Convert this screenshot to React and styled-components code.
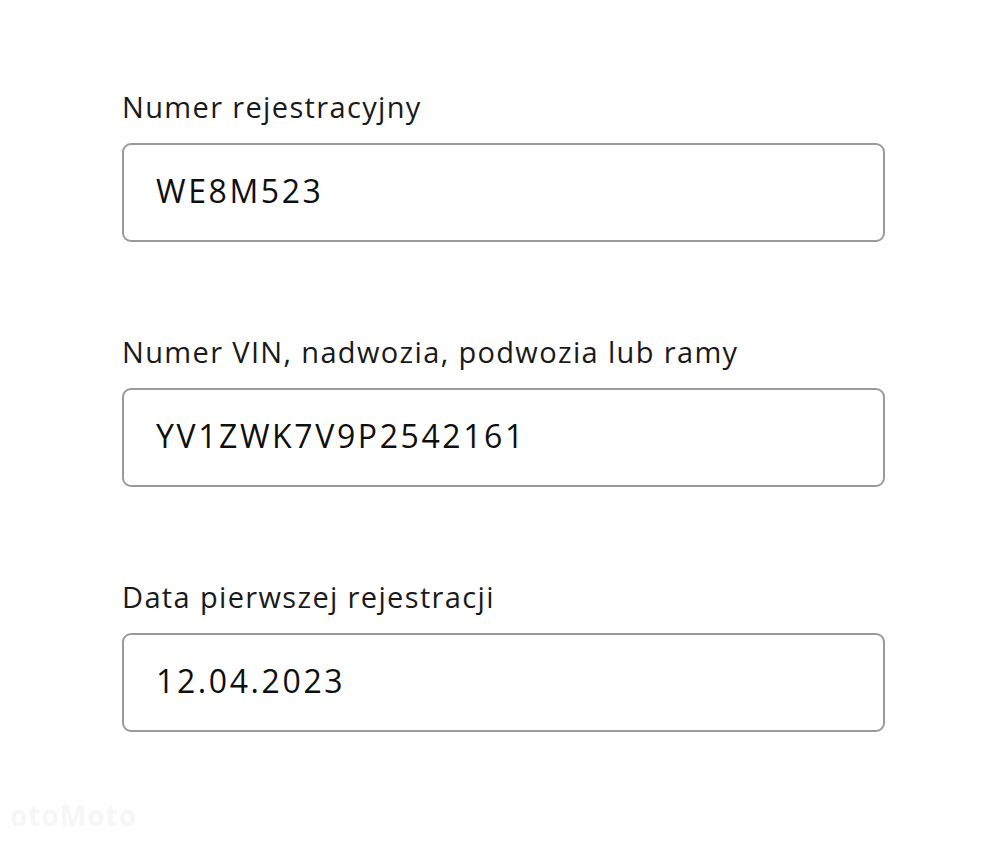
import React from "react";
import styled, { createGlobalStyle } from "styled-components";

const Global = createGlobalStyle`
  html, body { margin: 0; padding: 0; background: #ffffff; }
  body { font-family: "Open Sans", "Noto Sans", "Liberation Sans", sans-serif; }
`;

const Page = styled.div`
  position: relative;
  width: 1000px;
  height: 842px;
  box-sizing: border-box;
  padding: 88px 0 0 122px;
  display: flex;
  flex-direction: column;
  gap: 91px;
  background: #fff;
  overflow: hidden;
`;

const Field = styled.div`
  display: flex;
  flex-direction: column;
  gap: 17px;
  width: 763px;
`;

const Label = styled.div`
  font-size: 29px;
  line-height: 38px;
  color: #1a1a1a;
  letter-spacing: 1.35px;
`;

const Box = styled.div`
  box-sizing: border-box;
  height: 99px;
  border: 2px solid #9a9a9a;
  border-radius: 9px;
  display: flex;
  align-items: center;
  padding: 0 0 4px 32px;
  font-size: 32px;
  color: #0f0f0f;
  letter-spacing: 2.6px;
`;

const Watermark = styled.div`
  position: absolute;
  left: 10px;
  bottom: 8px;
  font-size: 28px;
  font-weight: 700;
  color: #f6f6f6;
  letter-spacing: 1px;
`;

const fields = [
  { label: "Numer rejestracyjny", value: "WE8M523" },
  { label: "Numer VIN, nadwozia, podwozia lub ramy", value: "YV1ZWK7V9P2542161" },
  { label: "Data pierwszej rejestracji", value: "12.04.2023" },
];

export default function App() {
  return (
    <>
      <Global />
      <Page>
        {fields.map((f) => (
          <Field key={f.label}>
            <Label>{f.label}</Label>
            <Box>{f.value}</Box>
          </Field>
        ))}
        <Watermark>otoMoto</Watermark>
      </Page>
    </>
  );
}
